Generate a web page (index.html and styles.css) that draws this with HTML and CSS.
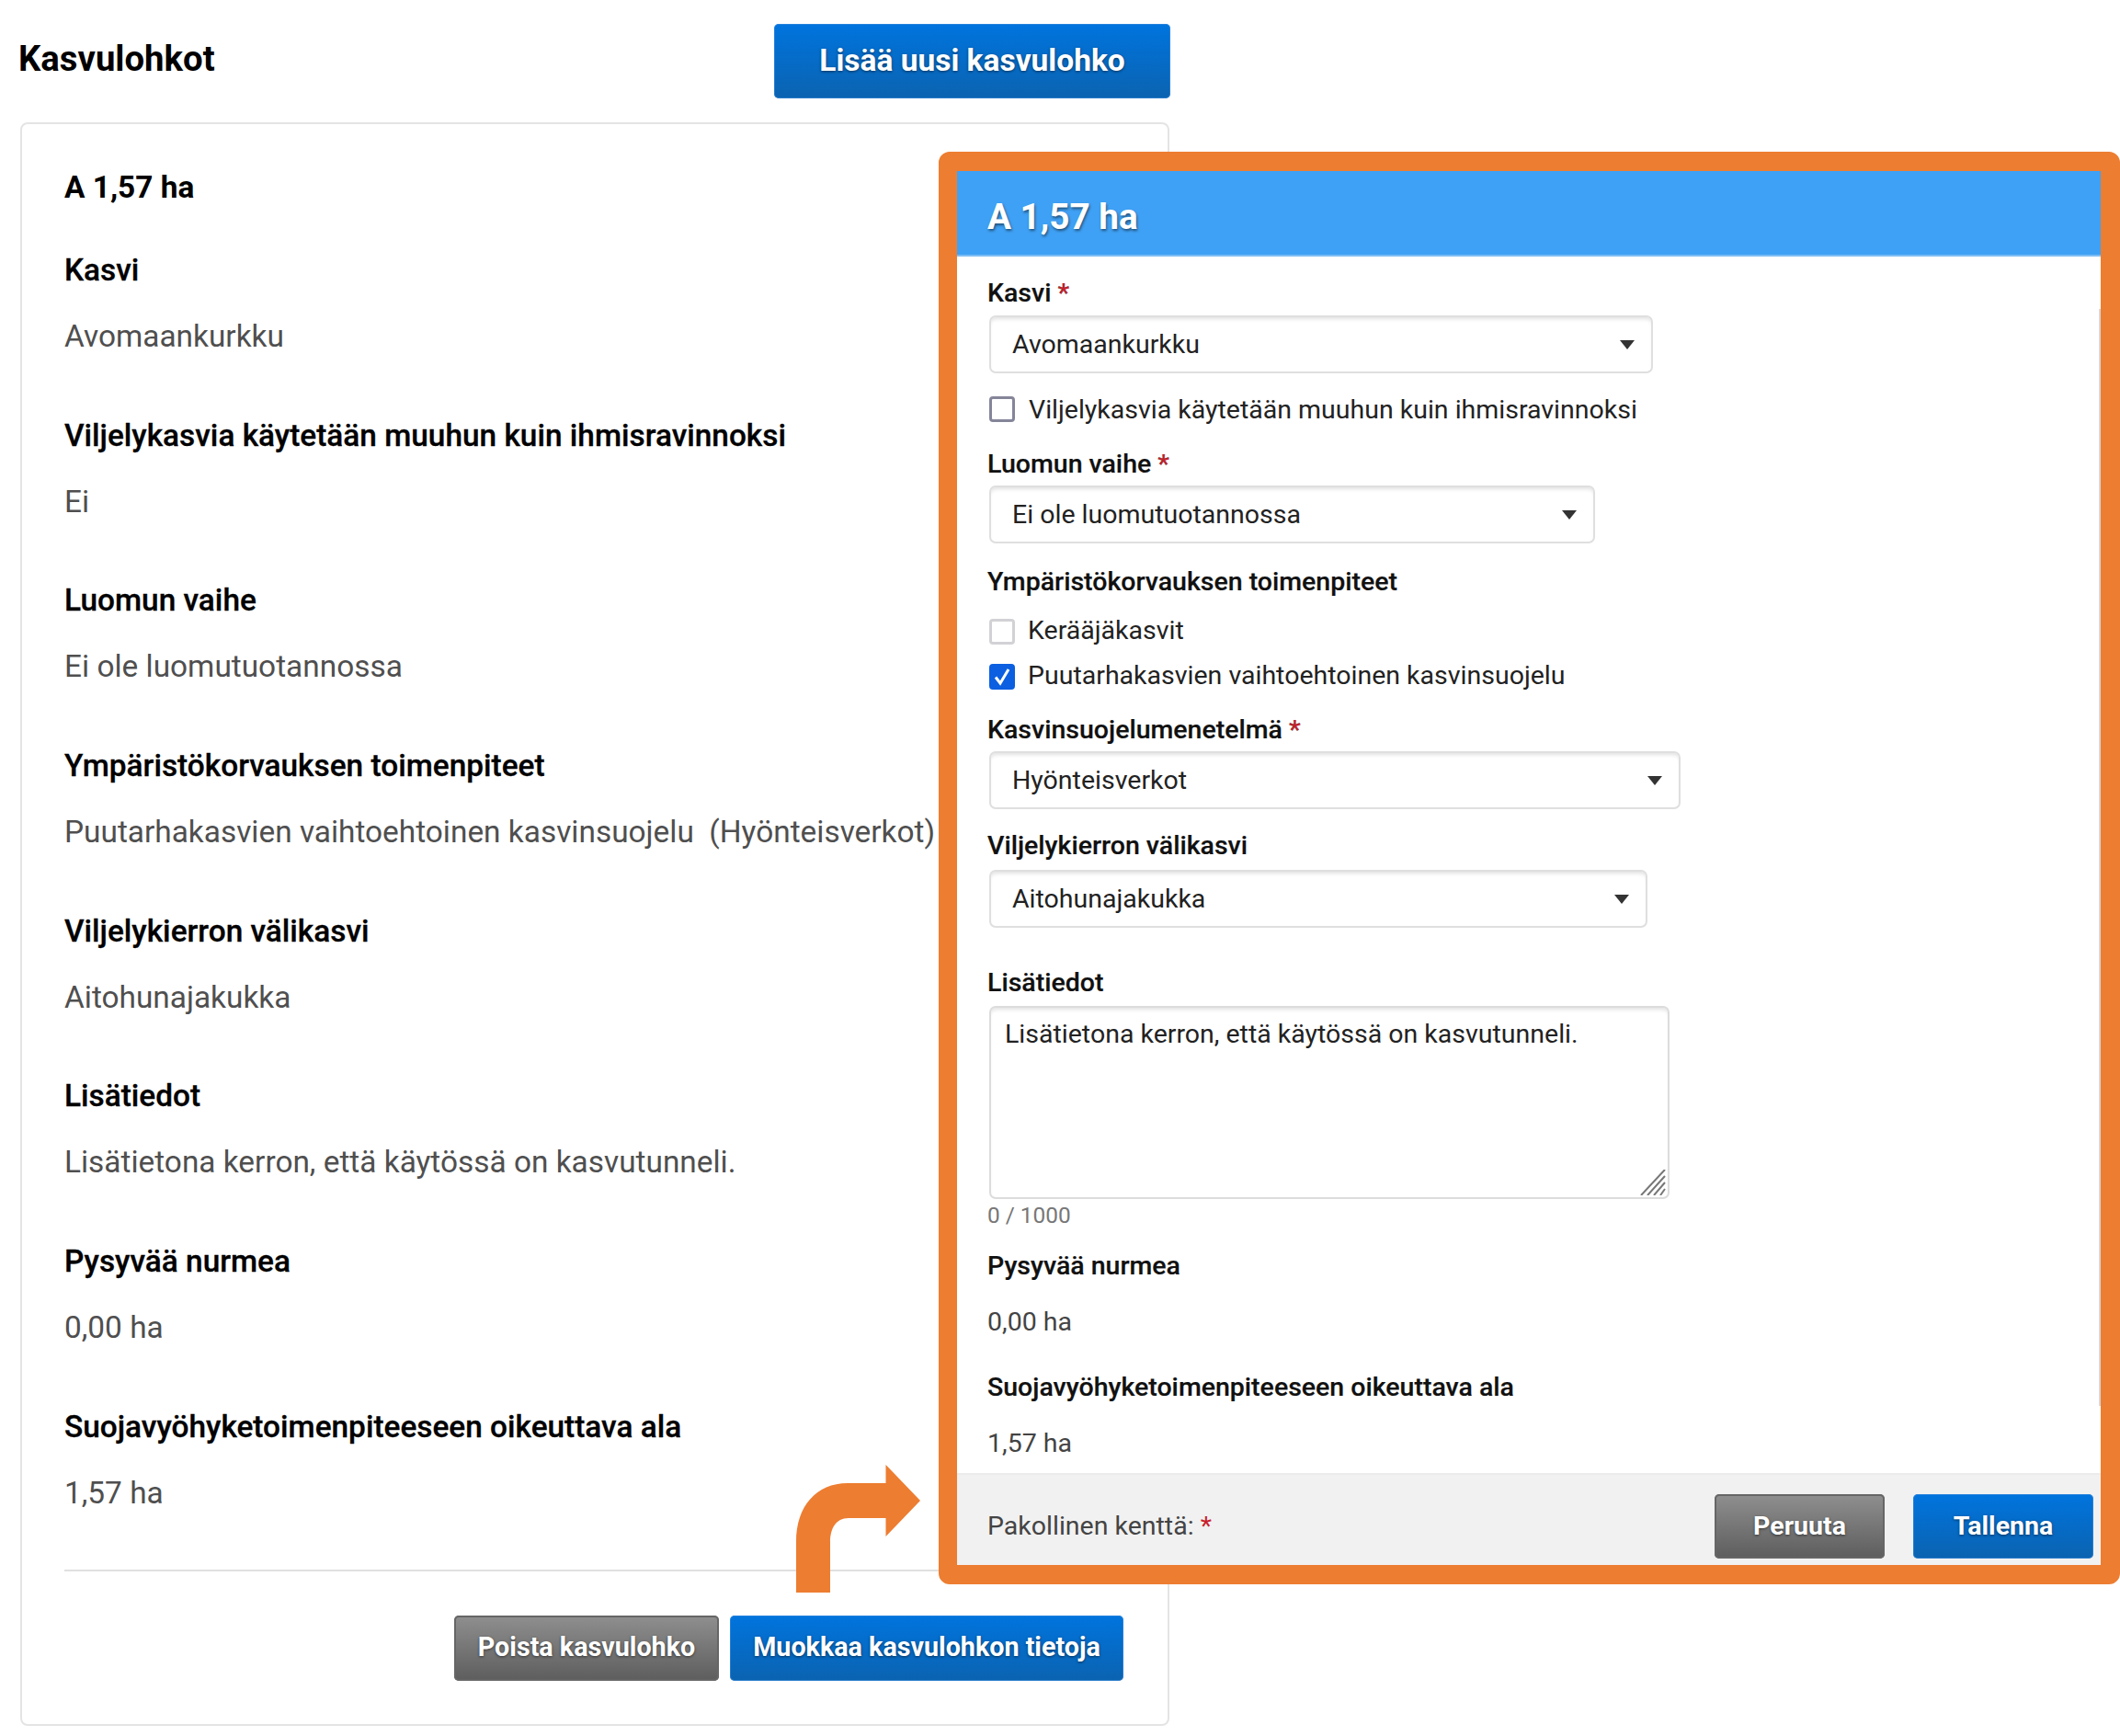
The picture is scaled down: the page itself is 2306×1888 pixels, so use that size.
FILE: index.html
```html
<!DOCTYPE html>
<html lang="fi">
<head>
<meta charset="utf-8">
<title>Kasvulohkot</title>
<link rel="stylesheet" href="styles.css">
</head>
<body>
<main class="page">
  <header class="page-head">
    <h1 class="page-title">Kasvulohkot</h1>
    <button class="btn btn-blue btn-add">Lisää uusi kasvulohko</button>
  </header>
  <section class="card">
    <h2 class="card-title">A 1,57 ha</h2>
    <dl class="info">
      <dt>Kasvi</dt><dd>Avomaankurkku</dd>
      <dt>Viljelykasvia käytetään muuhun kuin ihmisravinnoksi</dt><dd>Ei</dd>
      <dt>Luomun vaihe</dt><dd>Ei ole luomutuotannossa</dd>
      <dt>Ympäristökorvauksen toimenpiteet</dt><dd>Puutarhakasvien vaihtoehtoinen kasvinsuojelu&nbsp; (Hyönteisverkot)</dd>
      <dt>Viljelykierron välikasvi</dt><dd>Aitohunajakukka</dd>
      <dt>Lisätiedot</dt><dd>Lisätietona kerron, että käytössä on kasvutunneli.</dd>
      <dt>Pysyvää nurmea</dt><dd>0,00 ha</dd>
      <dt>Suojavyöhyketoimenpiteeseen oikeuttava ala</dt><dd>1,57 ha</dd>
    </dl>
    <div class="card-actions">
      <button class="btn btn-gray btn-delete">Poista kasvulohko</button>
      <button class="btn btn-blue btn-edit">Muokkaa kasvulohkon tietoja</button>
    </div>
  </section>
</main>

<svg class="arrow" width="140" height="139" viewBox="0 0 140 139" aria-hidden="true">
  <path d="M5 139V84C5 45 27 20 61 20H102.500V0L140 39L102.500 78V58H62C48 58 42 70 42 84V139Z" fill="#ed7d31"/>
</svg>

<aside class="frame">
  <div class="dialog">
    <h2 class="dialog-head">A 1,57 ha</h2>
    <form class="dialog-body">
      <div class="label lab-kasvi">Kasvi <span class="req">*</span></div>
      <div class="select sel-kasvi">Avomaankurkku<i class="caret"></i></div>
      <label class="check chk-first"><span class="box box-dark"></span>Viljelykasvia käytetään muuhun kuin ihmisravinnoksi</label>
      <div class="label lab-luomu">Luomun vaihe <span class="req">*</span></div>
      <div class="select sel-luomu">Ei ole luomutuotannossa<i class="caret"></i></div>
      <div class="label lab-ymp">Ympäristökorvauksen toimenpiteet</div>
      <label class="check chk-keraaja"><span class="box"></span>Kerääjäkasvit</label>
      <label class="check chk-puutarha"><span class="box box-on"><svg width="22" height="24" viewBox="0 0 22 24"><path d="M4 12.500L9 19L18 4" fill="none" stroke="#fff" stroke-width="3"/></svg></span>Puutarhakasvien vaihtoehtoinen kasvinsuojelu</label>
      <div class="label lab-menetelma">Kasvinsuojelumenetelmä <span class="req">*</span></div>
      <div class="select sel-menetelma">Hyönteisverkot<i class="caret"></i></div>
      <div class="label lab-vali">Viljelykierron välikasvi</div>
      <div class="select sel-vali">Aitohunajakukka<i class="caret"></i></div>
      <div class="label lab-lisa">Lisätiedot</div>
      <div class="textarea">Lisätietona kerron, että käytössä on kasvutunneli.
        <svg class="grip" width="28" height="28" viewBox="0 0 28 28"><path d="M1 28L27 0M8 28L27 7M15 28L27 14M22 28L27 21" stroke="#777" stroke-width="2" fill="none"/></svg>
      </div>
      <div class="count">0 / 1000</div>
      <div class="label lab-nurmi">Pysyvää nurmea</div>
      <div class="plain">0,00 ha</div>
      <div class="label lab-suoja">Suojavyöhyketoimenpiteeseen oikeuttava ala</div>
      <div class="plain">1,57 ha</div>
    </form>
    <footer class="dialog-foot">
      <div class="foot-note">Pakollinen kenttä: <span class="req">*</span></div>
      <button class="btn btn-gray btn-cancel">Peruuta</button>
      <button class="btn btn-blue btn-save">Tallenna</button>
    </footer>
  </div>
</aside>
</body>
</html>
```

FILE: styles.css
```css
* { box-sizing: border-box; }
html, body { margin: 0; height: 100%; overflow: hidden; background: #fff; }
body { font-family: Roboto, "Liberation Sans", sans-serif; color: #000; position: relative; }

.page { width: 1273px; }
.page-head { display: flex; justify-content: space-between; align-items: center; height: 133px; padding: 26px 0 26px 20px; }
.page-title { margin: 0; font-size: 38.300px; font-weight: 700; line-height: 40px; position: relative; top: -3px; }

.btn { display: block; border: 0; padding: 0 0 2px; font-family: inherit; font-weight: 700; color: #fff; text-shadow: 0 1px 3px rgba(0,0,0,.55); border-radius: 5px; white-space: nowrap; }
.btn-blue { background: linear-gradient(#0074de, #0b63b0); box-shadow: inset 0 0 0 1px rgba(60,140,220,.6); }
.btn-gray { background: linear-gradient(#8f8f8f, #5d5d5d); box-shadow: inset 0 0 0 2px #666; }
.btn-add { width: 431px; height: 81px; font-size: 33.500px; padding-bottom: 3px; }

.card { width: 1250px; height: 1744px; margin-left: 22px; padding: 49px 48px 0 46px; border: 2px solid #e4e4e4; border-radius: 8px; }
.card-title { margin: 0 0 50px; font-size: 33.400px; line-height: 40px; font-weight: 700; }
.info { margin: 0; }
.info dt { font-size: 33.400px; line-height: 40px; font-weight: 500; margin-bottom: 32px; -webkit-text-stroke: .3px #000; }
.info dd { margin: 0 0 67.700px; font-size: 33.400px; line-height: 40px; color: #4f4f4f; white-space: nowrap; }
.info dd:last-child { margin-bottom: 0; }
.card-actions { margin-top: 63px; padding-top: 48px; border-top: 2px solid #e0e0e0; display: flex; justify-content: flex-end; gap: 12px; }
.btn-delete { width: 288px; height: 71px; font-size: 28.700px; }
.btn-edit { width: 428px; height: 71px; font-size: 28.700px; }

.arrow { position: absolute; left: 861px; top: 1593px; }

.frame { position: absolute; left: 1021px; top: 165px; width: 1285px; height: 1558px; border: solid #ed7d31; border-width: 21px 21px 21px 20px; border-radius: 12px; background: #fff; }
.dialog { height: 100%; display: flex; flex-direction: column; }
.dialog-head { margin: 0; height: 93px; padding-left: 33px; font-size: 38.700px; line-height: 100px; font-weight: 700; color: #fff; background: #3fa1f5; border-bottom: 2px solid #7dbdf5; text-shadow: 1px 2px 3px rgba(0,0,0,.5); }
.dialog-body { position: relative; flex: 1; padding: 23px 0 0 33px; font-size: 28.500px; color: #222; }
.dialog-body::after { content: ""; position: absolute; right: 0; top: 57px; width: 2px; height: 1193px; background: #d6d6da; }

.label { font-size: 28.500px; line-height: 34px; font-weight: 500; color: #111; -webkit-text-stroke: .2px #111; }
.req { color: #c8202a; }
.lab-luomu { margin-top: 29px; }
.lab-ymp { margin-top: 25px; }
.lab-menetelma { margin-top: 27px; }
.lab-vali { margin-top: 23px; }
.lab-lisa { margin-top: 43px; }
.lab-nurmi { margin-top: 24px; }
.lab-suoja { margin-top: 37px; }

.select { position: relative; height: 63px; margin: 8px 0 0 2px; padding-left: 23px; line-height: 59px; font-size: 28.500px; color: #222; border: 2px solid #dfdfdf; border-radius: 7px; box-shadow: inset 0 4px 4px -2px rgba(0,0,0,.12); }
.sel-kasvi { width: 722px; margin-top: 7px; }
.sel-luomu { width: 659px; margin-top: 6px; }
.sel-menetelma { width: 752px; margin-top: 6px; }
.sel-vali { width: 716px; margin-top: 9px; }
.caret { position: absolute; right: 18px; top: 25px; border: solid transparent; border-width: 10px 8px 0; border-top-color: #333; }

.check { display: flex; align-items: center; height: 28px; margin-left: 2px; gap: 15px; font-size: 28.500px; color: #222; }
.chk-first { margin-top: 25px; }
.chk-keraaja { margin-top: 23px; gap: 14px; padding-bottom: 3px; }
.chk-puutarha { margin-top: 21px; gap: 14px; padding-bottom: 3px; }
.chk-keraaja .box, .chk-puutarha .box { margin-bottom: -3px; }
.box { flex: none; width: 28px; height: 28px; border: 3px solid #d2d2d6; border-radius: 4px; background: #fff; }
.box-dark { border-color: #85859a; }
.box-on { border-color: #0b5fe0; background: #0b5fe0; display: flex; align-items: center; justify-content: center; }
.box-on svg { flex: none; }

.textarea { position: relative; width: 740px; height: 210px; margin: 8px 0 0 2px; padding: 11px 15px; line-height: 36px; font-size: 28.500px; color: #222; border: 2px solid #dcdcdc; border-radius: 7px; box-shadow: inset 0 4px 4px -2px rgba(0,0,0,.12); }
.grip { position: absolute; right: 2px; bottom: 2px; }
.count { margin-top: 4px; font-size: 24.400px; line-height: 28px; color: #777; }
.plain { margin-top: 27px; font-size: 28.500px; line-height: 34px; color: #444; }

.dialog-foot { flex: none; height: 100px; display: flex; align-items: flex-start; padding: 21px 8px 0 33px; background: #f1f1f1; border-top: 2px solid #ebebeb; }
.foot-note { flex: 1; font-size: 28.500px; line-height: 34px; color: #444; padding-top: 18px; }
.btn-cancel { width: 185px; height: 70px; font-size: 28.500px; margin-right: 31px; }
.btn-save { width: 196px; height: 70px; font-size: 28.500px; }
```
